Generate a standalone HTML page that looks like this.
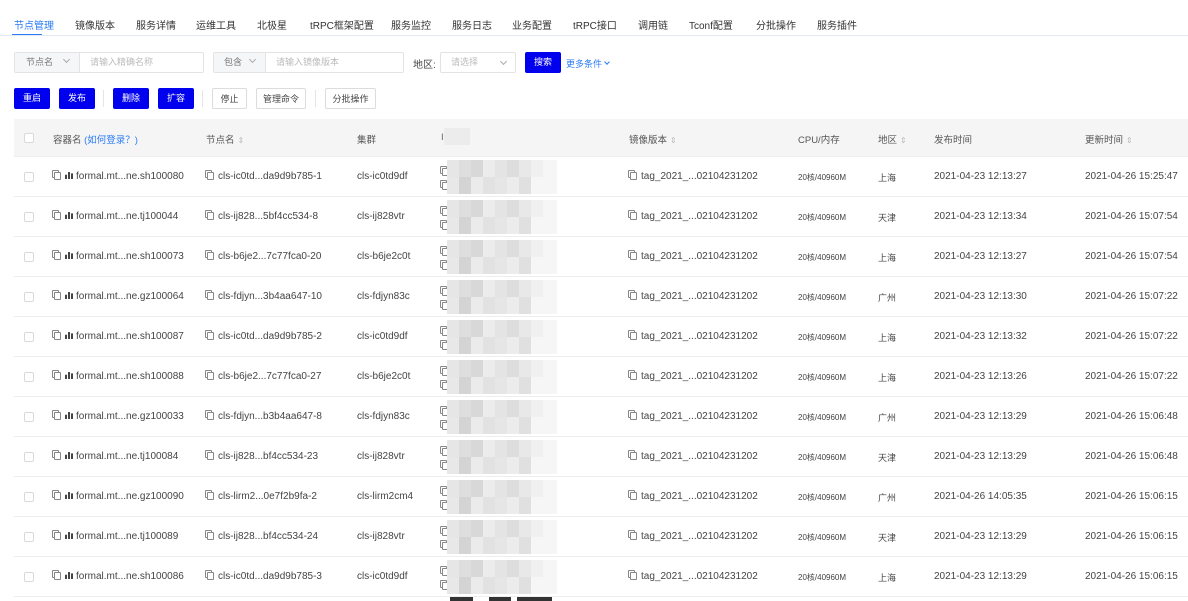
<!DOCTYPE html>
<html><head><meta charset="utf-8"><style>
*{box-sizing:border-box;margin:0;padding:0}
body{width:1188px;height:601px;overflow:hidden;background:#fff;font-family:"Liberation Sans","Noto Sans CJK SC",sans-serif;color:#333;font-size:10px;position:relative}
.a{position:absolute;white-space:nowrap}
.tab{top:17px;font-size:10px;color:#333}
.btn{position:absolute;height:21px;top:88px;font-size:9px;line-height:21px;text-align:center;border-radius:2px}
.p{background:#0000ee;color:#fff}
.o{border:1px solid #dcdcdc;color:#444;background:#fff}
.inp{position:absolute;top:52px;height:21px;border:1px solid #e3e3e3;border-radius:2px;font-size:9px;color:#bbb;line-height:19px}
.th{top:132px;font-size:9.5px;color:#555}
.row{position:absolute;left:14px;width:1174px;height:40px;border-bottom:1px solid #eee}
.c{position:absolute;top:14px;font-size:10px;color:#444;white-space:nowrap}
.cb{position:absolute;left:10px;top:15px;width:10px;height:10px;border:1px solid #d9d9d9;border-radius:2px;background:#fff}
.cp{display:inline-block;width:7px;height:8px;border:1px solid #888;border-radius:1px;margin-right:4px;vertical-align:-1px;box-shadow:-2px -2px 0 -1px #fff,-2px -2px 0 0 #888}
.bar{display:inline-block;width:8px;height:7px;margin-right:3px;background:linear-gradient(90deg,#444 0 2px,transparent 2px 3px,#444 3px 5px,transparent 5px 6px,#444 6px 8px);clip-path:polygon(0 40%,2px 40%,2px 0,5px 0,5px 20%,8px 20%,8px 100%,0 100%)}
.sort{color:#bbb;font-size:8px;margin-left:3px}
.chev{display:inline-block;width:5px;height:5px;border-right:1px solid #aaa;border-bottom:1px solid #aaa;transform:rotate(45deg);vertical-align:3px}
.blur{position:absolute;left:433px;width:110px;height:34px;top:3px;background:
linear-gradient(90deg,#e6e6e6 0 12px,#dedede 12px 24px,#d8d8d8 24px 36px,#ececec 36px 48px,#e4e4e4 48px 60px,#ddd 60px 72px,#e8e8e8 72px 84px,#f0f0f0 84px 96px,#f6f6f6 96px)}
.blur:after{content:"";position:absolute;left:0;top:17px;width:100%;height:17px;background:linear-gradient(90deg,#e8e8e8 0 12px,#d4d4d4 12px 24px,#ebebeb 24px 36px,#e2e2e2 36px 48px,#e6e6e6 48px 60px,#ececec 60px 72px,#e0e0e0 72px 84px,#f6f6f6 84px)}
</style></head><body>
<div class="a tab" style="left:14px;color:#2b7cf6">节点管理</div>
<div style="position:absolute;left:12px;top:34px;width:30px;height:2px;background:#2b7cf6"></div>
<div style="position:absolute;left:0;top:35px;width:1188px;height:1px;background:#e4e8f0"></div>
<div class="a tab" style="left:75px">镜像版本</div>
<div class="a tab" style="left:136px">服务详情</div>
<div class="a tab" style="left:196px">运维工具</div>
<div class="a tab" style="left:257px">北极星</div>
<div class="a tab" style="left:310px">tRPC框架配置</div>
<div class="a tab" style="left:391px">服务监控</div>
<div class="a tab" style="left:452px">服务日志</div>
<div class="a tab" style="left:512px">业务配置</div>
<div class="a tab" style="left:573px">tRPC接口</div>
<div class="a tab" style="left:638px">调用链</div>
<div class="a tab" style="left:689px">Tconf配置</div>
<div class="a tab" style="left:756px">分批操作</div>
<div class="a tab" style="left:817px">服务插件</div>

<div class="inp" style="left:14px;width:190px"><span style="display:inline-block;width:65px;height:19px;background:#f5f6f8;border-right:1px solid #e3e3e3;color:#777;padding-left:11px">节点名 <span class="chev" style="margin-left:8px"></span></span><span style="margin-left:10px">请输入精确名称</span></div>
<div class="inp" style="left:213px;width:191px"><span style="display:inline-block;width:52px;height:19px;background:#f5f6f8;border-right:1px solid #e3e3e3;color:#777;padding-left:10px">包含 <span class="chev" style="margin-left:5px"></span></span><span style="margin-left:10px">请输入镜像版本</span></div>
<div class="a" style="left:413px;top:56px;font-size:10px;color:#444">地区:</div>
<div class="inp" style="left:440px;width:76px;padding-left:10px">请选择<span class="chev" style="position:absolute;right:9px;top:6px"></span></div>
<div class="btn p" style="left:525px;top:52px;width:36px">搜索</div>
<div class="a" style="left:566px;top:57px;font-size:9px;color:#2b7cf6">更多条件 <span class="chev" style="border-color:#2b7cf6;width:4px;height:4px"></span></div>

<div class="btn p" style="left:14px;width:36px">重启</div>
<div class="btn p" style="left:59px;width:36px">发布</div>
<div style="position:absolute;left:103px;top:90px;width:1px;height:17px;background:#e5e5e5"></div>
<div class="btn p" style="left:113px;width:36px">删除</div>
<div class="btn p" style="left:158px;width:36px">扩容</div>
<div style="position:absolute;left:202px;top:90px;width:1px;height:17px;background:#e5e5e5"></div>
<div class="btn o" style="left:212px;width:35px">停止</div>
<div class="btn o" style="left:256px;width:50px">管理命令</div>
<div style="position:absolute;left:315px;top:90px;width:1px;height:17px;background:#e5e5e5"></div>
<div class="btn o" style="left:325px;width:51px">分批操作</div>

<div style="position:absolute;left:14px;top:119px;width:1174px;height:38px;background:#f5f5f6;border-bottom:1px solid #eee"></div>
<div style="position:absolute;left:24px;top:133px;width:10px;height:10px;border:1px solid #d9d9d9;border-radius:2px;background:#fff"></div>
<div class="a th" style="left:53px">容器名 <span style="color:#2b7cf6">(如何登录？)</span></div>
<div class="a th" style="left:206px">节点名<span class="sort">⇕</span></div>
<div class="a th" style="left:357px">集群</div>
<div class="a th" style="left:441px;color:#666">I</div>
<div style="position:absolute;left:444px;top:128px;width:26px;height:17px;background:#ececec"></div>
<div class="a th" style="left:629px">镜像版本<span class="sort">⇕</span></div>
<div class="a th" style="left:798px">CPU/内存</div>
<div class="a th" style="left:878px">地区<span class="sort">⇕</span></div>
<div class="a th" style="left:934px">发布时间</div>
<div class="a th" style="left:1085px">更新时间<span class="sort">⇕</span></div>

<div id="rows"></div>
<div style="position:absolute;left:450px;top:597px;width:23px;height:4px;background:#333"></div>
<div style="position:absolute;left:489px;top:597px;width:22px;height:4px;background:#333"></div>
<div style="position:absolute;left:517px;top:597px;width:35px;height:4px;background:#333"></div>
<script>
var d=[
["sh100080","ic0td...da9d9b785-1","cls-ic0td9df","上海","2021-04-23 12:13:27","2021-04-26 15:25:47"],
["tj100044","ij828...5bf4cc534-8","cls-ij828vtr","天津","2021-04-23 12:13:34","2021-04-26 15:07:54"],
["sh100073","b6je2...7c77fca0-20","cls-b6je2c0t","上海","2021-04-23 12:13:27","2021-04-26 15:07:54"],
["gz100064","fdjyn...3b4aa647-10","cls-fdjyn83c","广州","2021-04-23 12:13:30","2021-04-26 15:07:22"],
["sh100087","ic0td...da9d9b785-2","cls-ic0td9df","上海","2021-04-23 12:13:32","2021-04-26 15:07:22"],
["sh100088","b6je2...7c77fca0-27","cls-b6je2c0t","上海","2021-04-23 12:13:26","2021-04-26 15:07:22"],
["gz100033","fdjyn...b3b4aa647-8","cls-fdjyn83c","广州","2021-04-23 12:13:29","2021-04-26 15:06:48"],
["tj100084","ij828...bf4cc534-23","cls-ij828vtr","天津","2021-04-23 12:13:29","2021-04-26 15:06:48"],
["gz100090","lirm2...0e7f2b9fa-2","cls-lirm2cm4","广州","2021-04-26 14:05:35","2021-04-26 15:06:15"],
["tj100089","ij828...bf4cc534-24","cls-ij828vtr","天津","2021-04-23 12:13:29","2021-04-26 15:06:15"],
["sh100086","ic0td...da9d9b785-3","cls-ic0td9df","上海","2021-04-23 12:13:29","2021-04-26 15:06:15"]];
var h="";
d.forEach(function(r,i){
h+='<div class="row" style="top:'+(157+i*40)+'px"><div class="cb"></div>'+
'<div class="c" style="left:40px"><span class="cp"></span><span class="bar"></span>formal.mt...ne.'+r[0]+'</div>'+
'<div class="c" style="left:193px"><span class="cp"></span>cls-'+r[1]+'</div>'+
'<div class="c" style="left:343px">'+r[2]+'</div>'+
'<div class="c" style="left:428px;top:9px;line-height:14px"><span class="cp"></span><br><span class="cp"></span></div>'+
'<div class="blur"></div>'+
'<div class="c" style="left:616px"><span class="cp"></span>tag_2021_...02104231202</div>'+
'<div class="c" style="left:784px;font-size:8px;top:15px">20核/40960M</div>'+
'<div class="c" style="left:864px;font-size:9px;top:14px">'+r[3]+'</div>'+
'<div class="c" style="left:920px">'+r[4]+'</div>'+
'<div class="c" style="left:1071px">'+r[5]+'</div></div>';});
document.getElementById("rows").innerHTML=h;
</script>
</body></html>
